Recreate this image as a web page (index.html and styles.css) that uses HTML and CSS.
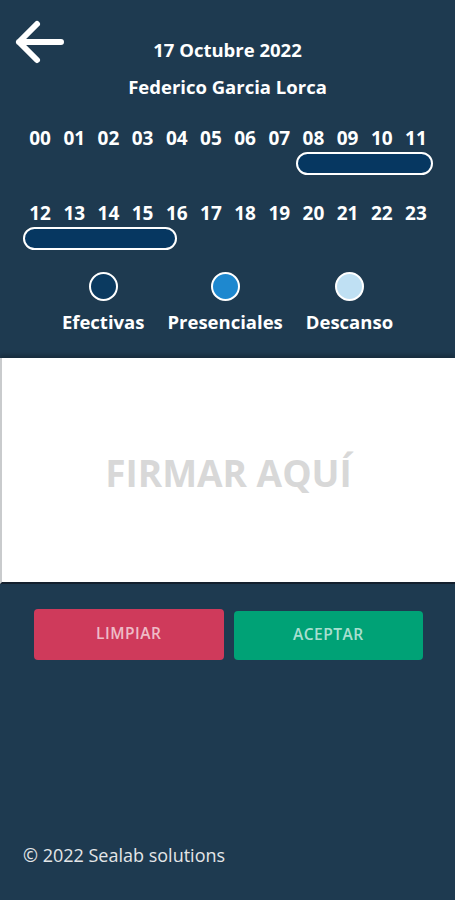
FILE: index.html
```html
<!DOCTYPE html>
<html lang="es">
<head>
<meta charset="utf-8">
<title>Firma jornada</title>
<link rel="stylesheet" href="styles.css">
</head>
<body>
<div class="page">
  <header class="header">
    <svg class="back" viewBox="0 0 54 46" width="54" height="46" aria-label="Volver">
      <path d="M48 23 H6 M24 5 L6 23 L24 41" fill="none" stroke="#fff" stroke-width="6" stroke-linecap="round" stroke-linejoin="round"/>
    </svg>
    <div class="date">17 Octubre 2022</div>
    <div></div>
  </header>
  <div class="name">Federico Garcia Lorca</div>

  <section class="timeline">
    <div class="hours">
      <span>00</span><span>01</span><span>02</span><span>03</span><span>04</span><span>05</span>
      <span>06</span><span>07</span><span>08</span><span>09</span><span>10</span><span>11</span>
    </div>
    <div class="track"><div class="bar" style="margin-left:273px;width:138px"></div></div>
    <div class="hours second">
      <span>12</span><span>13</span><span>14</span><span>15</span><span>16</span><span>17</span>
      <span>18</span><span>19</span><span>20</span><span>21</span><span>22</span><span>23</span>
    </div>
    <div class="track"><div class="bar" style="margin-left:0;width:154px"></div></div>
  </section>

  <section class="legend">
    <div class="legend-item"><span class="dot dot-efectivas"></span><span class="label">Efectivas</span></div>
    <div class="legend-item"><span class="dot dot-presenciales"></span><span class="label">Presenciales</span></div>
    <div class="legend-item"><span class="dot dot-descanso"></span><span class="label">Descanso</span></div>
  </section>

  <section class="signature">
    <span class="sign-text">FIRMAR AQUÍ</span>
  </section>

  <div class="actions">
    <button class="btn btn-clear">LIMPIAR</button>
    <button class="btn btn-accept">ACEPTAR</button>
  </div>

  <footer class="footer">© 2022 Sealab solutions</footer>
</div>
</body>
</html>
```
FILE: styles.css
```css
* { box-sizing: border-box; }
html, body { margin: 0; padding: 0; }
body {
  background: #1e3a50;
  font-family: "Open Sans", "DejaVu Sans", sans-serif;
  color: #fff;
}
.page {
  min-height: 900px;
  display: flex;
  flex-direction: column;
}
.header {
  display: grid;
  grid-template-columns: 1fr auto 1fr;
  padding: 19px 13px 0;
}
.back { display: block; }
.date {
  padding-top: 19px;
  font-size: 18.5px;
  font-weight: 700;
  line-height: 24px;
  text-align: center;
}
.name {
  margin-top: 10px;
  font-size: 18.5px;
  font-weight: 700;
  line-height: 24px;
  text-align: center;
}
.timeline {
  padding: 0 22px 0 23px;
  margin-top: 28px;
}
.hours {
  display: grid;
  grid-template-columns: repeat(12, 1fr);
  font-size: 19px;
  font-weight: 700;
  line-height: 22px;
  text-align: center;
}
.hours.second { margin-top: 27px; }
.track {
  margin-top: 3px;
  height: 23px;
  display: flex;
}
.bar {
  height: 23px;
  border: 2px solid #fff;
  border-radius: 12px;
  background: #063761;
}
.legend {
  margin-top: 22px;
  display: flex;
  justify-content: center;
  gap: 23px;
}
.legend-item {
  display: flex;
  flex-direction: column;
  align-items: center;
}
.dot {
  width: 29px;
  height: 29px;
  border-radius: 50%;
  border: 2px solid #fff;
}
.dot-efectivas { background: #0b3a60; }
.dot-presenciales { background: #1e88cf; }
.dot-descanso { background: #bfe0f3; }
.label {
  margin-top: 9px;
  font-size: 18.5px;
  font-weight: 700;
  line-height: 24px;
}
.signature {
  margin-top: 24px;
  height: 226px;
  background: #fff;
  border-left: 2px solid #c9cbcd;
  border-bottom: 2px solid #14202e;
  box-shadow: 0 -3px 4px rgba(0, 0, 0, 0.25);
  display: flex;
  align-items: center;
  justify-content: center;
}
.sign-text {
  font-size: 37px;
  font-weight: 700;
  color: #d8d8d8;
  padding-top: 4px;
}
.actions {
  margin-top: 25px;
  padding: 0 32px 0 34px;
  display: flex;
  gap: 10px;
}
.btn {
  flex: 1;
  height: 51px;
  padding: 0 0 4px;
  border: none;
  border-radius: 4px;
  font-family: "Open Sans", sans-serif;
  font-size: 15.5px;
  font-weight: 600;
  letter-spacing: 0.5px;
  color: rgba(255, 255, 255, 0.68);
}
.btn-clear { background: #cf3a5b; }
.btn-accept { background: #00a276; margin-top: 2px; height: 49px; }
.footer {
  margin-top: auto;
  padding: 0 0 33px 23px;
  font-size: 18px;
  line-height: 24px;
  color: #e4e6e8;
}
```
